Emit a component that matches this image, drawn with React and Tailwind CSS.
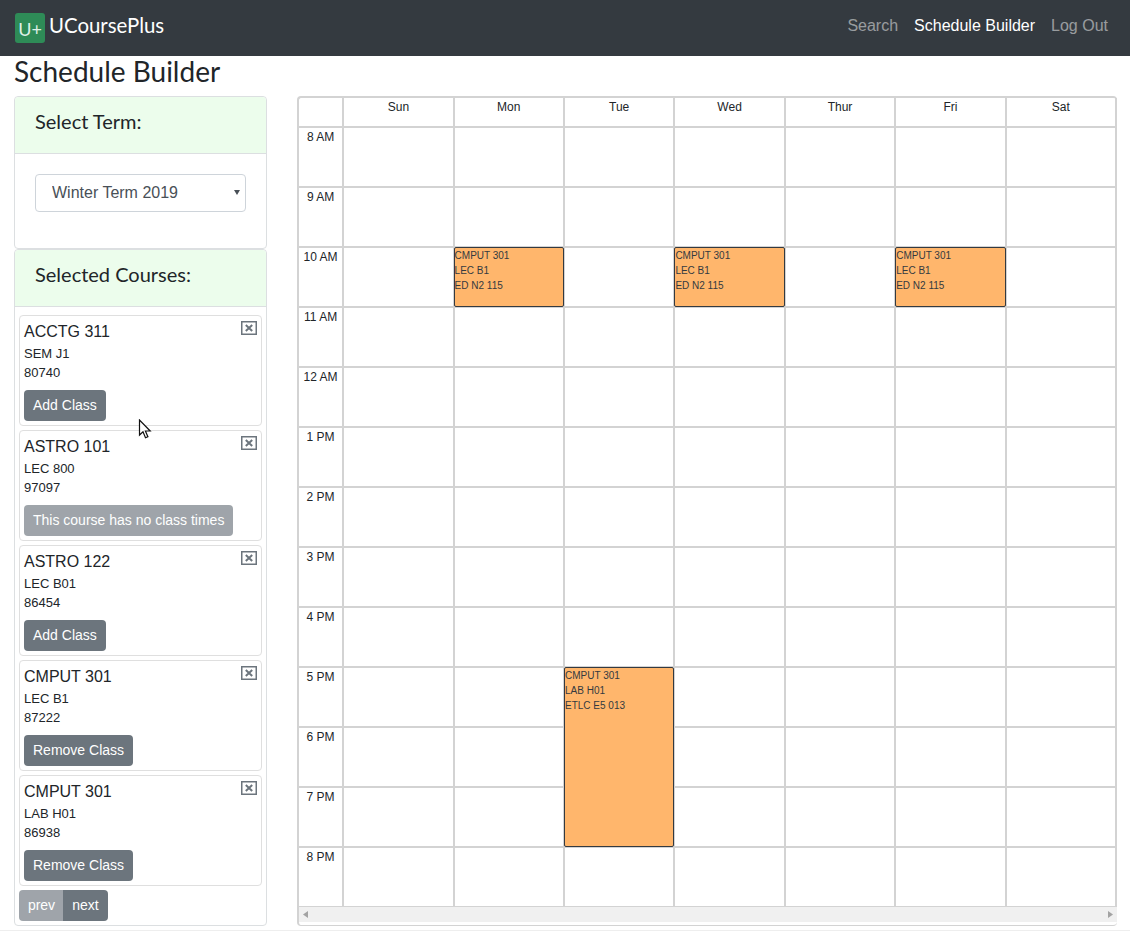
const hours = ["8 AM","9 AM","10 AM","11 AM","12 AM","1 PM","2 PM","3 PM","4 PM","5 PM","6 PM","7 PM","8 PM"];
const days = ["Sun","Mon","Tue","Wed","Thur","Fri","Sat"];

const courses = [
  { name: "ACCTG 311", section: "SEM J1", id: "80740", action: "Add Class" },
  { name: "ASTRO 101", section: "LEC 800", id: "97097", action: "This course has no class times", disabled: true },
  { name: "ASTRO 122", section: "LEC B01", id: "86454", action: "Add Class" },
  { name: "CMPUT 301", section: "LEC B1", id: "87222", action: "Remove Class" },
  { name: "CMPUT 301", section: "LAB H01", id: "86938", action: "Remove Class" },
];

const lec = { lines: ["CMPUT 301", "LEC B1", "ED N2 115"], tall: false };
const lab = { lines: ["CMPUT 301", "LAB H01", "ETLC E5 013"], tall: true };
// key is "day-hour"
const events = { "Mon-10 AM": lec, "Wed-10 AM": lec, "Fri-10 AM": lec, "Tue-5 PM": lab };

function CourseCard({ course }) {
  return (
    <div className="relative h-[111px] rounded border border-[#dfdfdf] px-1 pt-1">
      <div className="text-base leading-6 text-[#212529]">{course.name}</div>
      <div className="text-[13px] leading-[19px] text-[#212529]">
        <div>{course.section}</div>
        <div>{course.id}</div>
      </div>
      <button
        className={
          "mt-[8px] h-[31px] rounded bg-[#6c757d] px-[9px] pb-[2px] text-sm text-white " +
          (course.disabled ? "opacity-65" : "")
        }
      >
        {course.action}
      </button>
      <svg className="absolute right-[4px] top-[5px]" width="16" height="14" viewBox="0 0 16 14">
        <rect x="0.75" y="0.75" width="14.5" height="12.5" fill="none" stroke="#6c757d" strokeWidth="1.5" />
        <path d="M4.8 4l6.4 6M11.2 4l-6.4 6" stroke="#6c757d" strokeWidth="2" />
      </svg>
    </div>
  );
}

function Calendar() {
  return (
    <div className="w-[820px] shrink-0 rounded border-t-2 border-l-2 border-[#d3d3d3] border-b border-b-[#d3d3d3]">
      <div className="h-[809px] overflow-hidden">
        <div className="grid grid-cols-[45.2px_repeat(7,1fr)] grid-rows-[30px_repeat(13,60px)] text-xs text-[#212529]">
          <div className="border-r-2 border-b-2 border-[#d3d3d3]" />
          {days.map((d) => (
            <div key={d} className="border-r-2 border-b-2 border-[#d3d3d3] text-center leading-[18px]">
              {d}
            </div>
          ))}
          {hours.map((h) => (
            <div key={h} className="contents">
              <div className="border-r-2 border-b-2 border-[#d3d3d3] pt-[1px] text-center leading-[16px]">{h}</div>
              {days.map((d) => {
                const ev = events[d + "-" + h];
                return (
                  <div key={d} className="relative border-r-2 border-b-2 border-[#d3d3d3]">
                    {ev && (
                      <div
                        className={
                          "absolute -top-px left-[-1px] right-[-1px] z-10 rounded-[2px] border border-[#343a40] bg-[#ffb66c] text-[10px] leading-[15px] text-[#343a40] " +
                          (ev.tall ? "h-[180px]" : "h-[60px]")
                        }
                      >
                        {ev.lines.map((l) => (
                          <div key={l}>{l}</div>
                        ))}
                      </div>
                    )}
                  </div>
                );
              })}
            </div>
          ))}
        </div>
      </div>
      <div className="flex h-[15px] items-center justify-between bg-[#f0f0f0] px-[4px]">
        <svg width="5" height="7" viewBox="0 0 5 7"><path d="M5 0v7L0 3.5z" fill="#a3a3a3" /></svg>
        <svg width="5" height="7" viewBox="0 0 5 7"><path d="M0 0v7l5-3.5z" fill="#a3a3a3" /></svg>
      </div>
    </div>
  );
}

export default function App() {
  return (
    <div className="relative h-[931px] overflow-hidden border-b border-[#eeeeee] bg-white font-['Liberation_Sans',sans-serif]">
      <nav className="flex h-14 items-center justify-between bg-[#343a40] pl-[15px] pr-[22px]">
        <div className="flex items-center gap-1">
          <div className="flex h-[30px] w-[30px] items-center justify-center rounded-[3px] bg-[#2e8b57] pt-[2px] font-['Lato',sans-serif] text-lg text-[#dff0e6]">
            U+
          </div>
          <span className="mb-[6px] font-['Lato',sans-serif] text-[20.4px] text-white">UCoursePlus</span>
        </div>
        <div className="mb-1 flex gap-4 text-base text-white/50">
          <span>Search</span>
          <span className="text-white">Schedule Builder</span>
          <span>Log Out</span>
        </div>
      </nav>

      <div className="px-[14px]">
        <h1 className="h-[40px] font-['Lato',sans-serif] text-[28px] leading-[30px] text-[#212529]">Schedule Builder</h1>
        <div className="flex gap-[30px]">
          <div className="w-[253px] shrink-0">
            <div className="h-[153px] rounded border border-[#dcdfe1]">
              <div className="h-[57px] rounded-t border-b border-[#dcdfe1] bg-[#ecfdec] px-5 pt-[8px] font-['Lato',sans-serif] text-xl leading-[32px] text-[#212529]">
                Select Term:
              </div>
              <div className="relative px-5 pt-5">
                <select className="h-[38px] w-[211px] appearance-none rounded border border-[#ced4da] bg-white px-4 pb-[1px] text-base text-[#495057]">
                  <option>Winter Term 2019</option>
                </select>
                <svg className="absolute left-[219px] top-[36px]" width="6" height="5" viewBox="0 0 6 5">
                  <path d="M0 0h6L3 5z" fill="#495057" />
                </svg>
              </div>
            </div>
            <div className="h-[677px] rounded border border-[#dcdfe1]">
              <div className="h-[57px] rounded-t border-b border-[#dcdfe1] bg-[#ecfdec] px-5 pt-[8px] font-['Lato',sans-serif] text-xl leading-[32px] text-[#212529]">
                Selected Courses:
              </div>
              <div className="flex flex-col gap-1 px-1 pt-2">
                {courses.map((c) => (
                  <CourseCard key={c.section + c.id} course={c} />
                ))}
                <div className="flex text-sm text-white">
                  <span className="flex h-[31px] w-[44px] items-center justify-center rounded-l bg-[#6c757d] pb-[2px] pl-[1px] opacity-65">prev</span>
                  <span className="flex h-[31px] w-[45px] items-center justify-center rounded-r bg-[#6c757d] pb-[2px]">next</span>
                </div>
              </div>
            </div>
          </div>
          <Calendar />
        </div>
      </div>

      {/* mouse pointer caught in the screenshot */}
      <svg className="absolute left-[138px] top-[419px]" width="14" height="21" viewBox="0 0 14 21">
        <path d="M1.5 1v15l3.5-3.3 2.5 6 2.4-1-2.5-5.7h4.8z" fill="#fff" stroke="#111" strokeWidth="1.2" />
      </svg>
    </div>
  );
}
